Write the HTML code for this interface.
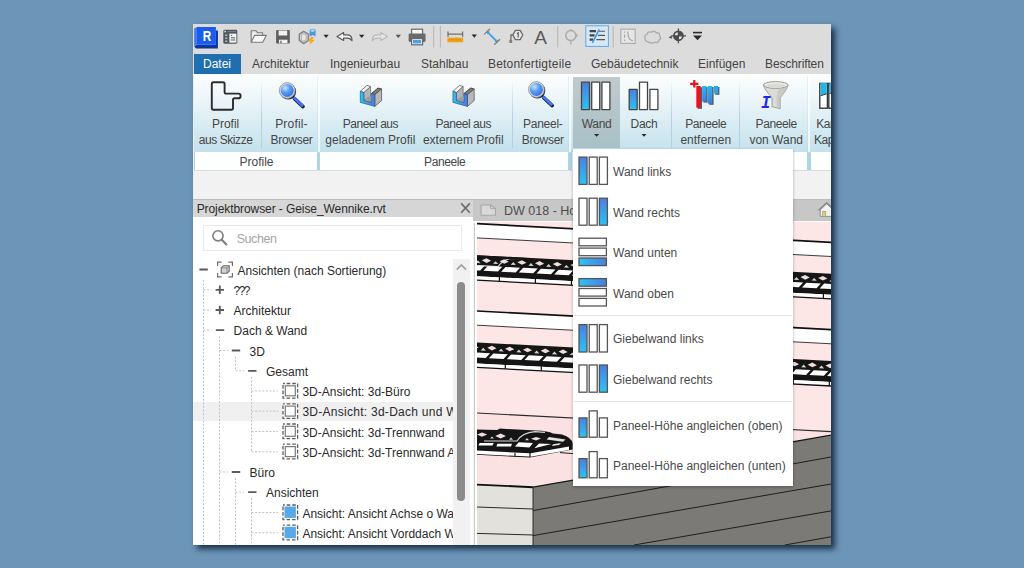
<!DOCTYPE html>
<html lang="de">
<head>
<meta charset="utf-8">
<title>Revit - Wand</title>
<style>
*{box-sizing:border-box;margin:0;padding:0}
html,body{width:1024px;height:568px;overflow:hidden}
body{background:#6c95b7;font-family:"Liberation Sans",sans-serif;font-size:12px;color:#333;position:relative}
#shadow{position:absolute;left:193px;top:24px;width:638px;height:521px;background:#dcdcdc;box-shadow:4px 4px 6px 0 rgba(16,38,62,.9)}
#c{position:absolute;left:0;top:0;width:1024px;height:568px;clip-path:polygon(193px 24px,831px 24px,831px 545px,193px 545px)}
#c>*{position:absolute}
.t{position:absolute;white-space:nowrap;line-height:14px;height:14px}
.c{text-align:center}
/* top bars */
#qat{left:193px;top:24px;width:638px;height:30px;background:#dcdcdc}
#tabs{left:193px;top:54px;width:638px;height:20px;background:#dcdcdc}
#datei{left:194px;top:54px;width:47px;height:20px;background:#1f6eaf}
.tab{font-size:12px;color:#444;top:57px}
/* ribbon */
#ribbon{left:193px;top:74px;width:638px;height:96px;background:linear-gradient(#fdfefe 0,#e9f4f8 30px,#c3e1ec 78px,#add5e4 79px,#add5e4 100%)}
.plabel{top:152px;height:18px;background:#fdfefe}
.rsep{top:78px;width:1px;height:70px;background:linear-gradient(rgba(180,205,215,0),#b3d0dc 60%,#b3d0dc)}
.rt{font-size:12px;color:#464646}
.psep{top:76px;width:3px;height:76px;background:linear-gradient(90deg,rgba(160,200,215,.22) 0,rgba(160,200,215,.22) .6px,rgba(255,255,255,.7) .6px)}
#optbar{left:193px;top:170px;width:638px;height:29px;background:#f2f2f2;border-top:1px solid #dcdcdc}
/* browser */
#pb{left:193px;top:199px;width:280px;height:346px;background:#fff}
#pbh{left:193px;top:199px;width:280px;height:18px;background:#d6d6d6;border-top:1px solid #bdbdbd}
#split{left:473px;top:199px;width:4px;height:346px;background:linear-gradient(90deg,#f4f4f4 0,#f4f4f4 1.2px,#cbcbcb 1.2px,#cbcbcb 2.2px,#fff 2.2px)}
#search{left:203px;top:225px;width:259px;height:26px;border:1px solid #e9e9e9;background:#fff}
.tr{font-size:12px;color:#2a2a2a}
#sel{left:193px;top:402px;width:260px;height:19px;background:#f0f0f0}
#sbt{left:453px;top:259px;width:17px;height:286px;background:#f1f1f1}
#sbth{left:457px;top:282px;width:8px;height:219px;background:#8b8b8b;border-radius:4px}
/* view */
#vtab{left:473px;top:199px;width:358px;height:21.5px;background:#c7c7c7;border-top:1px solid #bcbcbc;box-shadow:0 2px 0 #fff}
#view{left:477px;top:222px;width:354px;height:323px}
/* menu */
#menu{left:573px;top:149.4px;width:219.6px;height:336.6px;background:#fff;box-shadow:0 1px 3px rgba(0,0,0,.3)}
.mi{font-size:12px;color:#4a4a4a;left:613px}
.msep{left:574px;width:218px;height:1px;background:#e4e4e4}
</style>
</head>
<body>
<div id="shadow"></div>
<div id="c">
<div id="qat"></div>
<div id="tabs"></div>
<div id="datei"></div>
<span class="t tab" style="left:203px;color:#fff">Datei</span>
<span class="t tab" style="left:252px">Architektur</span>
<span class="t tab" style="left:330px">Ingenieurbau</span>
<span class="t tab" style="left:421px">Stahlbau</span>
<span class="t tab" style="left:488px;letter-spacing:.2px">Betonfertigteile</span>
<span class="t tab" style="left:591px">Gebäudetechnik</span>
<span class="t tab" style="left:698px">Einfügen</span>
<span class="t tab" style="left:765px;letter-spacing:-.12px">Beschriften</span>


<!-- quick access toolbar icons -->
<svg id="qaticons" style="left:193px;top:24px" width="638" height="30" viewBox="193 24 638 30">
<defs>
<linearGradient id="gb" x1="0" y1="0" x2="0" y2="1"><stop offset="0" stop-color="#4b7de0"/><stop offset="1" stop-color="#2cc4f2"/></linearGradient>
<linearGradient id="gbh" x1="0" y1="0" x2="1" y2="0"><stop offset="0" stop-color="#2cc4f2"/><stop offset="1" stop-color="#4b7de0"/></linearGradient>
<radialGradient id="lens" cx="0.35" cy="0.3" r="0.8"><stop offset="0" stop-color="#c9e4ff"/><stop offset="0.45" stop-color="#5a9cf0"/><stop offset="1" stop-color="#2f6be0"/></radialGradient>
</defs>
<!-- R logo -->
<path d="M215.9 30.6 H217.9 V48.4 H196 L194.2 46.5 L196.9 44.7 H215.9 Z" fill="#0b36a0"/>
<path d="M194.2 28.6 L196.9 27 V44.7 L194.2 46.5 Z" fill="#3d7ae8"/>
<rect x="196.9" y="27" width="19" height="17.7" fill="#1a5cf0"/>
<!-- home panel -->
<rect x="223.3" y="29.7" width="14" height="14" rx="1.4" fill="#50565e"/>
<rect x="229.4" y="33.6" width="7" height="9" fill="#f6f6f6"/>
<rect x="224.4" y="30.8" width="1.5" height="1.5" fill="#e8ecf0"/>
<path d="M227.6 31.6h8.4" stroke="#7a828c" stroke-width="1"/>
<path d="M225 34.4h2.4v1.6H225z M225 37.4h2.4v1.6H225z M225 40.4h2.4v1.6H225z" fill="#aab0b8"/>
<path d="M230.8 35.4h1.4 M230.8 37.8h4.4 M230.8 40h4.4" stroke="#555" stroke-width="1"/>
<!-- open folder -->
<path d="M251.2 42.2 V30.8 H256 L257.6 32.8 H262.6 V35.4" fill="#ebebeb" stroke="#7a7a7a" stroke-width="1.1" stroke-linejoin="round"/>
<path d="M251.2 42.2 L254.6 35.4 H266.2 L262.8 42.2 Z" fill="#f8f8f8" stroke="#7a7a7a" stroke-width="1.1" stroke-linejoin="round"/>
<!-- save -->
<rect x="276.1" y="29.9" width="13.7" height="13.7" rx="1" fill="#5e5e5e"/>
<rect x="278.6" y="30.5" width="8.6" height="5" fill="#f0f0f0"/>
<rect x="279" y="39.7" width="8.5" height="3.5" fill="#f0f0f0"/>
<rect x="280.4" y="40.7" width="1.2" height="2.5" fill="#5e5e5e"/>
<!-- sync cube -->
<path d="M303.6 31.4 L308.4 34.2 V40.4 L303.6 43.6 L299.3 40.4 V34.2 Z" fill="#cfcfcf" stroke="#858585" stroke-width="1.4" stroke-linejoin="round"/>
<path d="M303.6 33.8 L306.2 35.4 V39.6 L303.6 41.2 L301.4 39.6 V35.4 Z" fill="#e6e6e6" stroke="#a0a0a0" stroke-width=".7"/>
<path d="M309.6 31 Q309.6 28.8 312.6 28.8 Q315.6 28.8 315.6 31 V36.6 L312.6 35 L309.6 36.6 Z" fill="#4c97dc"/>
<ellipse cx="312.6" cy="30.6" rx="2.2" ry="1.3" fill="#a8d4f4"/>
<path d="M311.2 36.8 L307.6 41.6 L310.6 41.4 L309.4 45.2 L314.8 39.8 L312 39.9 L314 37.2 Z" fill="#f8a61c"/>
<!-- dropdown arrows -->
<path d="M323.4 34.8h5.4l-2.7 3.2z M359 34.8h5.4l-2.7 3.2z M471.6 34.6h5.4l-2.7 3.2z" fill="#2b2b2b"/><path d="M395.6 34.8h5.4l-2.7 3.2z" fill="#555"/>
<!-- undo -->
<path d="M337 36.4 L343.6 32.6 V34.8 H348 Q352 35 352 40.8 Q350.6 38.4 347.6 38.2 H343.6 V40.4 Z" fill="#f2f2f2" stroke="#5a5a5a" stroke-width="1.2" stroke-linejoin="round"/>
<!-- redo (disabled) -->
<path d="M387.4 36.4 L380.8 32.6 V34.8 H376.4 Q372.4 35 372.4 40.8 Q373.8 38.4 376.8 38.2 H380.8 V40.4 Z" fill="#e6e6e6" stroke="#b9b9b9" stroke-width="1.2" stroke-linejoin="round"/>
<!-- printer -->
<rect x="411.6" y="29.2" width="11" height="6" fill="#f6f6f6" stroke="#6a6a6a" stroke-width="1.2"/>
<rect x="408.6" y="33.6" width="17" height="8.4" rx="1.4" fill="#6a6a6a"/>
<rect x="411.6" y="38.6" width="11" height="6.2" fill="#f6f6f6" stroke="#6a6a6a" stroke-width="1.2"/>
<rect x="413" y="40" width="8.2" height="3.4" fill="#4aa0e4"/>
<!-- separators -->
<path d="M433.7 26v21.5 M440.4 26v21.5 M557.7 26v21.5 M613.2 26v21.5" stroke="#b4b4b4" stroke-width="1"/>
<!-- measure -->
<path d="M448 31.4v5.4 M462.6 31.4v5.4 M448 34.1H462.6" stroke="#707070" stroke-width="1.3" fill="none"/>
<rect x="447.4" y="37.6" width="15.8" height="4.7" fill="#f3a31c"/>
<path d="M449.5 39v1.6 M451.7 39v1.6 M453.9 39v1.6 M456.1 39v1.6 M458.3 39v1.6 M460.5 39v1.6" stroke="#c98410" stroke-width=".9"/>
<!-- aligned dimension -->
<path d="M487.4 31.8 L497.2 41.8" stroke="#3d9fe4" stroke-width="1.7"/>
<path d="M486.6 31 l3.4 .8 -2.6 2.6z M498 42.6 l-3.4 -.8 2.6 -2.6z" fill="#3d9fe4"/>
<path d="M484.2 34.4 L490 28.8 M494.2 44.8 L500 39.2" stroke="#858078" stroke-width="1.3"/>
<!-- tag -->
<path d="M515.4 30.4 H520.2 L522.8 35 L520.2 39.6 H515.4 L512.8 35 Z" fill="#e6e6e6" stroke="#6a6a6a" stroke-width="1.3" stroke-linejoin="round"/>
<path d="M517 33.8l1.2-.9v4.6" stroke="#555" stroke-width="1.1" fill="none"/>
<path d="M512.8 35 H511 L510.8 40" fill="none" stroke="#6a6a6a" stroke-width="1.3"/>
<rect x="509.4" y="40" width="2.8" height="2.9" fill="#7a7a7a"/>
<!-- spot elevation (disabled) -->
<circle cx="570.8" cy="35.6" r="5" fill="none" stroke="#adadad" stroke-width="1.5"/>
<path d="M570.8 40.6v4" stroke="#adadad" stroke-width="1.4" fill="none"/>
<path d="M575.6 33.2 l2.6 2.4 -2.6 2.4z M568.8 30.6 l2 -1.6 2 1.6z" fill="#adadad"/>
<!-- thin lines (active) -->
<rect x="585.8" y="25.8" width="22.6" height="20.6" fill="#d6e8f6" stroke="#5fa8dd" stroke-width="1"/>
<path d="M589.6 31.2h6.4 M589.6 35.4h5 M589.6 39.6h3.6" stroke="#444" stroke-width="2.2"/>
<path d="M599 31.2h6 M598 35.4h7 M596.4 39.6h8.6" stroke="#555" stroke-width="1.1"/>
<path d="M599.2 29.4 L592.4 43" stroke="#3c9be0" stroke-width="1.6"/>
<!-- disabled box w/ curve -->
<rect x="620.8" y="29.2" width="14.4" height="14.2" fill="#e6e6e6" stroke="#aeaeae" stroke-width="1.2"/>
<path d="M624.6 31.6v1.2 M624.6 34.4v3.4 M624.6 39.6v1.4 M627.8 31.6 Q627.8 40.4 633 40.8" stroke="#a2a2a2" stroke-width="1.1" fill="none"/>
<!-- cloud (disabled) -->
<path d="M647.6 41.6 Q644.4 41 645.2 38.2 Q643.8 35.4 647 34.4 Q647.6 31 651.2 32.2 Q654.2 30 656.4 32.8 Q660 32.6 659.6 36 Q661.8 38.6 659 40.2 Q658.4 43.4 655 42.2 Q652.8 44 650.4 42.4 Q648.6 43 647.6 41.6 Z" fill="#dcdcdc" stroke="#adadad" stroke-width="1.4"/>
<!-- crosshair -->
<circle cx="678.4" cy="35.8" r="4.5" fill="#ececec" stroke="#4c4c4c" stroke-width="1.8"/>
<path d="M678.4 35.8 V31.3 A4.5 4.5 0 0 1 682.9 35.8 Z M678.4 35.8 V40.3 A4.5 4.5 0 0 1 673.9 35.8 Z" fill="#4c4c4c"/>
<path d="M678.4 28.4v14.8 M671.4 35.8h14.6" stroke="#4c4c4c" stroke-width="1.3"/>
<path d="M668.6 37.6 l3.2 -2.4 v3.6 z" fill="#4c4c4c"/>
<!-- customize -->
<path d="M693 32.6h9" stroke="#2b2b2b" stroke-width="1.6"/>
<path d="M693 35.4h9l-4.5 4.8z" fill="#2b2b2b"/>
</svg>
<span class="t" style="left:201.9px;top:28.6px;font-size:14px;font-weight:bold;color:#fff;line-height:14px;transform:scaleX(.84);transform-origin:50% 50%">R</span>
<span class="t" style="left:534.3px;top:26.6px;font-size:19px;color:#5a5a5a;line-height:22px;height:22px">A</span>

<div id="ribbon"></div>
<div class="plabel" style="left:195px;width:122px"></div>
<div class="plabel" style="left:320px;width:248.4px"></div>
<div class="plabel" style="left:571.5px;width:235.5px"></div>
<div class="plabel" style="left:811px;width:30px"></div>
<div id="wandhl" style="left:573px;top:77px;width:46.8px;height:71.4px;background:linear-gradient(#c1cacd,#a8c0c7)"></div>
<div class="rsep" style="left:261px"></div>
<div class="rsep" style="left:512px"></div>
<div class="rsep" style="left:671px"></div>
<div class="rsep" style="left:739px"></div>
<div class="psep" style="left:317px"></div>
<div class="psep" style="left:568.4px"></div>
<div class="psep" style="left:807px"></div>
<span class="t c rt" style="left:155.6px;top:117px;width:140px">Profil</span>
<span class="t c rt" style="left:155.6px;top:133px;width:140px;letter-spacing:-0.43px">aus Skizze</span>
<span class="t c rt" style="left:221.5px;top:117px;width:140px;letter-spacing:0.18px">Profil-</span>
<span class="t c rt" style="left:221.5px;top:133px;width:140px;letter-spacing:-0.29px">Browser</span>
<span class="t c rt" style="left:300.4px;top:117px;width:140px;letter-spacing:-0.46px">Paneel aus</span>
<span class="t c rt" style="left:300.4px;top:133px;width:140px">geladenem Profil</span>
<span class="t c rt" style="left:393.3px;top:117px;width:140px;letter-spacing:-0.46px">Paneel aus</span>
<span class="t c rt" style="left:393.3px;top:133px;width:140px">externem Profil</span>
<span class="t c rt" style="left:472.79999999999995px;top:117px;width:140px;letter-spacing:-0.27px">Paneel-</span>
<span class="t c rt" style="left:472.79999999999995px;top:133px;width:140px;letter-spacing:-0.29px">Browser</span>
<span class="t c rt" style="left:635.8px;top:117px;width:140px;letter-spacing:-0.41px">Paneele</span>
<span class="t c rt" style="left:635.8px;top:133px;width:140px">entfernen</span>
<span class="t c rt" style="left:706.2px;top:117px;width:140px;letter-spacing:-0.41px">Paneele</span>
<span class="t c rt" style="left:706.2px;top:133px;width:140px">von Wand</span>
<span class="t c rt" style="left:526.6px;top:117px;width:140px;letter-spacing:-0.30px">Wand</span>
<span class="t c rt" style="left:574px;top:117px;width:140px;letter-spacing:-0.28px">Dach</span>
<span class="t rt" style="left:816.3px;top:117px;letter-spacing:-.5px">Kante</span>
<span class="t rt" style="left:813.9px;top:133px;letter-spacing:-.4px">Kappen</span>
<span class="t c rt pl" style="left:186.5px;top:155px;width:140px">Profile</span>
<span class="t c rt pl" style="left:374.7px;top:155px;width:140px;letter-spacing:-0.41px">Paneele</span>
<svg id="ribicons" style="left:193px;top:74px" width="638" height="78" viewBox="193 74 638 78">
<!-- profile L shape -->
<path d="M213.4 82.3 H223 Q224.6 82.3 224.6 83.9 V92 Q224.6 93.6 226.2 93.6 H238.4 Q240.6 93.6 240.6 95.9 Q240.6 98.3 238.4 98.3 H234.6 Q233 98.3 233 99.9 V108 Q233 109.7 231.4 109.7 H213.4 Q211.8 109.7 211.8 108 V83.9 Q211.8 82.3 213.4 82.3 Z" fill="none" stroke="#2b2b2b" stroke-width="1.9"/>
<!-- magnifiers -->
<g>
<path d="M294.4 98.6 L303 106.6" stroke="#161a30" stroke-width="3.6" stroke-linecap="round"/>
<path d="M293.6 97.4 L302.2 105.4" stroke="#4876e8" stroke-width="2.8" stroke-linecap="round"/>
<circle cx="288.2" cy="91.6" r="7.9" fill="#1a1a1a" opacity=".9"/>
<circle cx="287.2" cy="90.5" r="7.9" fill="#d4d8de" stroke="#8a9098" stroke-width=".8"/>
<circle cx="287.2" cy="90.5" r="6.5" fill="url(#lens)"/>
</g>
<g transform="translate(249.2 -1)">
<path d="M294.4 98.6 L303 106.6" stroke="#161a30" stroke-width="3.6" stroke-linecap="round"/>
<path d="M293.6 97.4 L302.2 105.4" stroke="#4876e8" stroke-width="2.8" stroke-linecap="round"/>
<circle cx="288.2" cy="91.6" r="7.9" fill="#1a1a1a" opacity=".9"/>
<circle cx="287.2" cy="90.5" r="7.9" fill="#d4d8de" stroke="#8a9098" stroke-width=".8"/>
<circle cx="287.2" cy="90.5" r="6.5" fill="url(#lens)"/>
</g>
<!-- U profiles -->
<g>
<path d="M360.3 91.3 L367 85.4 L370.6 86.6 L363.8 92.6 Z" fill="#f4f4f4" stroke="#4a4a4a" stroke-width=".7"/>
<path d="M363.8 92.6 L370.6 86.6 V96.4 L363.8 100.6 Z" fill="#b4b4b4" stroke="#5a5a5a" stroke-width=".6"/>
<path d="M363.8 100.6 L370.6 96.4 L371.3 102.6 Z" fill="#9c9c9c"/>
<path d="M371.3 93.6 L378 88 L381.6 89 L374.8 94.7 Z" fill="#7e7e7e" stroke="#2a2a2a" stroke-width=".8"/>
<path d="M374.8 94.7 L381.6 89 V100.6 L374.8 106.4 Z" fill="#b9b9b9" stroke="#4a4a4a" stroke-width=".7"/>
<path d="M360.3 91.3 L363.8 92.6 V100.6 L371.3 102.6 V93.6 L374.8 94.7 V106.4 L360.3 102.4 Z" fill="url(#gbh)" stroke="#2a4a7a" stroke-width=".6"/>
</g>
<g transform="translate(92.6 0)">
<path d="M360.3 91.3 L367 85.4 L370.6 86.6 L363.8 92.6 Z" fill="#f4f4f4" stroke="#4a4a4a" stroke-width=".7"/>
<path d="M363.8 92.6 L370.6 86.6 V96.4 L363.8 100.6 Z" fill="#b4b4b4" stroke="#5a5a5a" stroke-width=".6"/>
<path d="M363.8 100.6 L370.6 96.4 L371.3 102.6 Z" fill="#9c9c9c"/>
<path d="M371.3 93.6 L378 88 L381.6 89 L374.8 94.7 Z" fill="#7e7e7e" stroke="#2a2a2a" stroke-width=".8"/>
<path d="M374.8 94.7 L381.6 89 V100.6 L374.8 106.4 Z" fill="#b9b9b9" stroke="#4a4a4a" stroke-width=".7"/>
<path d="M360.3 91.3 L363.8 92.6 V100.6 L371.3 102.6 V93.6 L374.8 94.7 V106.4 L360.3 102.4 Z" fill="url(#gbh)" stroke="#2a4a7a" stroke-width=".6"/>
</g>
<!-- Wand icon -->
<g stroke="#444" stroke-width="1.3" stroke-linejoin="round">
<rect x="581.5" y="82.2" width="8" height="27.4" fill="url(#gb)"/>
<rect x="591.7" y="82.2" width="8" height="27.4" fill="#fff"/>
<rect x="601.9" y="82.2" width="8" height="27.4" fill="#fff"/>
<rect x="629.2" y="89.4" width="8" height="20.2" fill="url(#gb)"/>
<rect x="639.5" y="82.2" width="8" height="27.4" fill="#fff"/>
<rect x="649.9" y="89.4" width="8" height="20.2" fill="#fff"/>
</g>
<path d="M594 134h5.2l-2.6 2.8z M641.4 134h5.2l-2.6 2.8z" fill="#2b2b2b"/>
<!-- Paneele entfernen -->
<linearGradient id="gb2" x1="0" y1="0" x2="0" y2="1"><stop offset="0" stop-color="#27b9f1"/><stop offset="1" stop-color="#3c7fe0"/></linearGradient>
<g fill="#1c2a3c" opacity=".75"><rect x="697.6" y="87.2" width="4.4" height="21.6"/><rect x="703.4" y="87" width="4.2" height="15.6"/><rect x="709.2" y="87" width="4.4" height="17.8"/><rect x="715.2" y="87" width="4.2" height="7.8"/></g>
<rect x="696.3" y="86" width="4.4" height="21.6" fill="#ec1320"/>
<rect x="702.1" y="86" width="4.2" height="15.5" fill="url(#gb2)"/>
<rect x="707.8" y="86" width="4.4" height="17.7" fill="url(#gb2)"/>
<rect x="714" y="86" width="4.1" height="7.6" fill="#2aa6ee"/>
<path d="M694.3 80v7.6 M690.2 83.8h8.2" stroke="#ec1320" stroke-width="2.2"/>
<!-- funnel -->
<path d="M763.4 85.2 Q764 88.6 772 97.8 V106.6 L780.2 108.8 V97.8 Q787.6 88.6 788.1 85.2 Z" fill="#dcdcd8" stroke="#969692" stroke-width=".9"/>
<path d="M776.6 98 V107.8 L780.2 108.8 V97.8 Q787.6 88.6 788.1 85.2 L778 90 Z" fill="#c2c2bd" opacity=".65"/>
<ellipse cx="775.75" cy="85" rx="12.3" ry="3.4" fill="#ecece8" stroke="#9a9a96" stroke-width="1"/>
<ellipse cx="775.75" cy="85.6" rx="9.6" ry="2.2" fill="#dadad6"/>
<text transform="translate(760.9 107.8) scale(.9 1)" font-family="Liberation Mono, monospace" font-style="italic" font-weight="bold" font-size="18" fill="#2424f2">I</text>
<!-- Kante Kappen icon (cut off) -->
<g stroke="#3a3a3a" stroke-width="1.4">
<rect x="819.8" y="83.4" width="7.6" height="24.8" fill="#fff"/>
<rect x="828.8" y="83.4" width="7.6" height="24.8" fill="#fff"/>
</g>
<path d="M820.5 83 h6.2 v10.8 l-6.2 2 z M829.5 83 h6.2 v8.6 l-6.2 2 z" fill="#25b4e6"/>
<path d="M820.5 95.8 l6.2 -2 M829.5 93.6 l6.2 -2" stroke="#3a3a3a" stroke-width="1"/>
</svg>
<div id="optbar"></div>
<div id="lborder" style="left:193px;top:74px;width:1px;height:125px;background:#ededed"></div>

<div id="pb"></div>
<div id="pbh"></div>
<div id="split"></div>
<span class="t" style="left:196.7px;top:202.1px;font-size:12px;color:#2a2a2a;letter-spacing:-.08px">Projektbrowser - Geise_Wennike.rvt</span>
<div id="search"></div>
<span class="t" style="left:236.7px;top:232.2px;font-size:12.5px;color:#a6a6a6;letter-spacing:-.45px">Suchen</span>
<div id="sel"></div>
<div id="tree" style="left:193px;top:255.8px;width:260px;height:290px;overflow:hidden">
<span class="t tr" style="left:44.5px;top:7.84px">Ansichten (nach Sortierung)</span>
<span class="t tr" style="left:40.6px;top:28.09px;letter-spacing:-1.6px">???</span>
<span class="t tr" style="left:40.6px;top:48.34px">Architektur</span>
<span class="t tr" style="left:40.6px;top:68.59px">Dach &amp; Wand</span>
<span class="t tr" style="left:56.6px;top:88.84px">3D</span>
<span class="t tr" style="left:73.0px;top:109.09px">Gesamt</span>
<span class="t tr" style="left:109.4px;top:129.34px">3D-Ansicht: 3d-Büro</span>
<span class="t tr" style="left:109.4px;top:149.59px;letter-spacing:.27px">3D-Ansicht: 3d-Dach und Wand</span>
<span class="t tr" style="left:109.4px;top:169.84px">3D-Ansicht: 3d-Trennwand</span>
<span class="t tr" style="left:109.4px;top:190.09px">3D-Ansicht: 3d-Trennwand Achse</span>
<span class="t tr" style="left:56.6px;top:210.34px">Büro</span>
<span class="t tr" style="left:73.0px;top:230.59px">Ansichten</span>
<span class="t tr" style="left:109.4px;top:250.84px">Ansicht: Ansicht Achse o Wand</span>
<span class="t tr" style="left:109.4px;top:271.09px">Ansicht: Ansicht Vorddach Wand</span>
</div>
<div id="sbt"></div>
<div id="sbth"></div>
<svg id="treeg" style="left:193px;top:199px" width="284" height="346" viewBox="193 199 284 346">
<path d="M461.2 203.4 L469.8 212.8 M469.8 203.4 L461.2 212.8" stroke="#6a6a6a" stroke-width="1.6"/>
<circle cx="218" cy="235.8" r="5.1" fill="none" stroke="#7e7e7e" stroke-width="1.6"/><path d="M222 239.9 L226.4 244.5" stroke="#7e7e7e" stroke-width="2.1" stroke-linecap="round"/>
<path d="M203.5 280 V545 M203.5 289.8 H211.5 M203.5 310.0 H211.5 M203.5 330.2 H211.5 M219.5 336.2 V545 M219.5 350.5 H228 M219.5 472.0 H228 M235.5 356.5 V370.8 H244 M235.5 478.0 V545 M235.5 492.2 H244 M251.5 376.8 V451.8 M251.5 391.0 H278 M251.5 411.2 H278 M251.5 431.5 H278 M251.5 451.8 H278 M251.5 512.5 H278 M251.5 532.8 H278 M251.5 498.2 V545 " stroke="#c2c2c2" stroke-width="1" stroke-dasharray="2 1.6" fill="none"/>
<path d="M199.4 269.5 h8.4 M215.8 330.2 h8.4 M231.8 350.5 h8.4 M248.1 370.8 h8.4 M231.8 472.0 h8.4 M248.1 492.2 h8.4 M215.6 289.8 h8.4 M219.8 285.6 v8.4 M215.6 310.0 h8.4 M219.8 305.8 v8.4 " stroke="#5a5a5a" stroke-width="1.8" fill="none"/>
<g transform="translate(217 261.5)"><path d="M0.6 4.6 V0.6 H4.6 M11.4 0.6 H15.4 V4.6 M15.4 11.4 V15.4 H11.4 M4.6 15.4 H0.6 V11.4" fill="none" stroke="#6e6e6e" stroke-width="1.2"/><path d="M4.2 6.4 L6.4 4.2 H12.2 V9.6 L10 11.8 H4.2 Z" fill="#d2d2d2" stroke="#6a6a6a" stroke-width="1.1" stroke-linejoin="round"/><path d="M4.2 6.4 H10 V11.8 M10 6.4 L12.2 4.2" fill="none" stroke="#7a7a7a" stroke-width=".8"/></g>
<rect x="283" y="383.5" width="14.6" height="14.6" fill="#fff" stroke="#5e5e5e" stroke-width="1.3" stroke-dasharray="3.6 1.9" stroke-dashoffset="1.8"/><rect x="285.3" y="385.8" width="10" height="10" fill="#fdfdfd" stroke="#7c7c7c" stroke-width="1.2"/>
<rect x="283" y="403.8" width="14.6" height="14.6" fill="#fff" stroke="#5e5e5e" stroke-width="1.3" stroke-dasharray="3.6 1.9" stroke-dashoffset="1.8"/><rect x="285.3" y="406.1" width="10" height="10" fill="#fdfdfd" stroke="#7c7c7c" stroke-width="1.2"/>
<rect x="283" y="424.0" width="14.6" height="14.6" fill="#fff" stroke="#5e5e5e" stroke-width="1.3" stroke-dasharray="3.6 1.9" stroke-dashoffset="1.8"/><rect x="285.3" y="426.3" width="10" height="10" fill="#fdfdfd" stroke="#7c7c7c" stroke-width="1.2"/>
<rect x="283" y="444.2" width="14.6" height="14.6" fill="#fff" stroke="#5e5e5e" stroke-width="1.3" stroke-dasharray="3.6 1.9" stroke-dashoffset="1.8"/><rect x="285.3" y="446.6" width="10" height="10" fill="#fdfdfd" stroke="#7c7c7c" stroke-width="1.2"/>
<rect x="283" y="505.0" width="14.6" height="14.6" fill="#fff" stroke="#5e5e5e" stroke-width="1.3" stroke-dasharray="3.6 1.9" stroke-dashoffset="1.8"/><rect x="284.5" y="506.5" width="11.4" height="11.4" fill="#58a9e8"/>
<rect x="283" y="525.2" width="14.6" height="14.6" fill="#fff" stroke="#5e5e5e" stroke-width="1.3" stroke-dasharray="3.6 1.9" stroke-dashoffset="1.8"/><rect x="284.5" y="526.8" width="11.4" height="11.4" fill="#58a9e8"/>
<path d="M456.8 269.6 L461.4 265 L466 269.6" fill="none" stroke="#a0a0a0" stroke-width="1.6"/>
</svg>
<div id="vtab"></div>
<svg id="viewsvg" style="left:477px;top:222px" width="354" height="323" viewBox="477 222 354 323">
<rect x="477" y="222" width="354" height="323" fill="#fce6e6"/>
<g transform="matrix(1 0.0525 0 1 0 -25.0425)">
<rect x="477" y="413" width="360" height="120" fill="#fae2e2"/><path d="M477 413 H840" stroke="#2a2a2a" stroke-width="1.1"/>
<rect x="477" y="223.7" width="360" height="14.2" fill="#fff"/><path d="M477 223.7 H840" stroke="#111" stroke-width="1.7"/><path d="M477 237.9 H840" stroke="#2a2a2a" stroke-width=".9"/>
<rect x="477" y="311.0" width="360" height="14.2" fill="#fff"/><path d="M477 311.0 H840" stroke="#111" stroke-width="1.7"/><path d="M477 325.2 H840" stroke="#2a2a2a" stroke-width=".9"/>
<g><rect x="477" y="255.2" width="363" height="21" fill="#151515"/><rect x="477" y="276.2" width="363" height="3.8" fill="#fff"/><path d="M477 280.2 H840" stroke="#111" stroke-width="1.3"/><path d="M470.1 265.4 h14.5 l-4.4 5 h-14.5 Z M487.8 265.4 h14.5 l-4.4 5 h-14.5 Z M505.5 265.4 h14.5 l-4.4 5 h-14.5 Z M523.2 265.4 h14.5 l-4.4 5 h-14.5 Z M540.9 265.4 h14.5 l-4.4 5 h-14.5 Z M558.6 265.4 h14.5 l-4.4 5 h-14.5 Z M576.3 265.4 h14.5 l-4.4 5 h-14.5 Z M594.0 265.4 h14.5 l-4.4 5 h-14.5 Z M611.7 265.4 h14.5 l-4.4 5 h-14.5 Z M629.4 265.4 h14.5 l-4.4 5 h-14.5 Z M647.1 265.4 h14.5 l-4.4 5 h-14.5 Z M664.8 265.4 h14.5 l-4.4 5 h-14.5 Z M682.5 265.4 h14.5 l-4.4 5 h-14.5 Z M700.2 265.4 h14.5 l-4.4 5 h-14.5 Z M717.9 265.4 h14.5 l-4.4 5 h-14.5 Z M735.6 265.4 h14.5 l-4.4 5 h-14.5 Z M753.3 265.4 h14.5 l-4.4 5 h-14.5 Z M771.0 265.4 h14.5 l-4.4 5 h-14.5 Z M788.7 265.4 h14.5 l-4.4 5 h-14.5 Z M806.4 265.4 h14.5 l-4.4 5 h-14.5 Z M824.1 265.4 h14.5 l-4.4 5 h-14.5 Z M841.8 265.4 h14.5 l-4.4 5 h-14.5 Z " fill="#fff"/><path d="M486.5 257.8 l4.6 2.3 l-4.6 2.3 l-4.6 -2.3 Z M504.2 257.8 l4.6 2.3 l-4.6 2.3 l-4.6 -2.3 Z M521.9 257.8 l4.6 2.3 l-4.6 2.3 l-4.6 -2.3 Z M539.6 257.8 l4.6 2.3 l-4.6 2.3 l-4.6 -2.3 Z M557.3 257.8 l4.6 2.3 l-4.6 2.3 l-4.6 -2.3 Z M575.0 257.8 l4.6 2.3 l-4.6 2.3 l-4.6 -2.3 Z M592.7 257.8 l4.6 2.3 l-4.6 2.3 l-4.6 -2.3 Z M610.4 257.8 l4.6 2.3 l-4.6 2.3 l-4.6 -2.3 Z M628.1 257.8 l4.6 2.3 l-4.6 2.3 l-4.6 -2.3 Z M645.8 257.8 l4.6 2.3 l-4.6 2.3 l-4.6 -2.3 Z M663.5 257.8 l4.6 2.3 l-4.6 2.3 l-4.6 -2.3 Z M681.2 257.8 l4.6 2.3 l-4.6 2.3 l-4.6 -2.3 Z M698.9 257.8 l4.6 2.3 l-4.6 2.3 l-4.6 -2.3 Z M716.6 257.8 l4.6 2.3 l-4.6 2.3 l-4.6 -2.3 Z M734.3 257.8 l4.6 2.3 l-4.6 2.3 l-4.6 -2.3 Z M752.0 257.8 l4.6 2.3 l-4.6 2.3 l-4.6 -2.3 Z M769.7 257.8 l4.6 2.3 l-4.6 2.3 l-4.6 -2.3 Z M787.4 257.8 l4.6 2.3 l-4.6 2.3 l-4.6 -2.3 Z M805.1 257.8 l4.6 2.3 l-4.6 2.3 l-4.6 -2.3 Z M822.8 257.8 l4.6 2.3 l-4.6 2.3 l-4.6 -2.3 Z M840.5 257.8 l4.6 2.3 l-4.6 2.3 l-4.6 -2.3 Z M858.2 257.8 l4.6 2.3 l-4.6 2.3 l-4.6 -2.3 Z " fill="#f0dcdc"/><path d="M477.9 260.2 l2.6 2.8 h-5.2 Z M495.6 260.2 l2.6 2.8 h-5.2 Z M513.3 260.2 l2.6 2.8 h-5.2 Z M531.0 260.2 l2.6 2.8 h-5.2 Z M548.7 260.2 l2.6 2.8 h-5.2 Z M566.4 260.2 l2.6 2.8 h-5.2 Z M584.1 260.2 l2.6 2.8 h-5.2 Z M601.8 260.2 l2.6 2.8 h-5.2 Z M619.5 260.2 l2.6 2.8 h-5.2 Z M637.2 260.2 l2.6 2.8 h-5.2 Z M654.9 260.2 l2.6 2.8 h-5.2 Z M672.6 260.2 l2.6 2.8 h-5.2 Z M690.3 260.2 l2.6 2.8 h-5.2 Z M708.0 260.2 l2.6 2.8 h-5.2 Z M725.7 260.2 l2.6 2.8 h-5.2 Z M743.4 260.2 l2.6 2.8 h-5.2 Z M761.1 260.2 l2.6 2.8 h-5.2 Z M778.8 260.2 l2.6 2.8 h-5.2 Z M796.5 260.2 l2.6 2.8 h-5.2 Z M814.2 260.2 l2.6 2.8 h-5.2 Z M831.9 260.2 l2.6 2.8 h-5.2 Z M849.6 260.2 l2.6 2.8 h-5.2 Z " fill="#d4d4d4"/><path d="M499.4 275.7 v4.5 M535.4 275.7 v4.5 M571.4 275.7 v4.5 M607.4 275.7 v4.5 M643.4 275.7 v4.5 M679.4 275.7 v4.5 M715.4 275.7 v4.5 M751.4 275.7 v4.5 M787.4 275.7 v4.5 M823.4 275.7 v4.5 " stroke="#111" stroke-width="1.2"/></g>
<g><rect x="477" y="342.4" width="363" height="21" fill="#151515"/><rect x="477" y="363.4" width="363" height="3.8" fill="#fff"/><path d="M477 367.4 H840" stroke="#111" stroke-width="1.3"/><path d="M457.7 352.6 h14.6 l-4.4 5 h-14.6 Z M475.5 352.6 h14.6 l-4.4 5 h-14.6 Z M493.3 352.6 h14.6 l-4.4 5 h-14.6 Z M511.1 352.6 h14.6 l-4.4 5 h-14.6 Z M528.9 352.6 h14.6 l-4.4 5 h-14.6 Z M546.7 352.6 h14.6 l-4.4 5 h-14.6 Z M564.5 352.6 h14.6 l-4.4 5 h-14.6 Z M582.3 352.6 h14.6 l-4.4 5 h-14.6 Z M600.1 352.6 h14.6 l-4.4 5 h-14.6 Z M617.9 352.6 h14.6 l-4.4 5 h-14.6 Z M635.7 352.6 h14.6 l-4.4 5 h-14.6 Z M653.5 352.6 h14.6 l-4.4 5 h-14.6 Z M671.3 352.6 h14.6 l-4.4 5 h-14.6 Z M689.1 352.6 h14.6 l-4.4 5 h-14.6 Z M706.9 352.6 h14.6 l-4.4 5 h-14.6 Z M724.7 352.6 h14.6 l-4.4 5 h-14.6 Z M742.5 352.6 h14.6 l-4.4 5 h-14.6 Z M760.3 352.6 h14.6 l-4.4 5 h-14.6 Z M778.1 352.6 h14.6 l-4.4 5 h-14.6 Z M795.9 352.6 h14.6 l-4.4 5 h-14.6 Z M813.7 352.6 h14.6 l-4.4 5 h-14.6 Z M831.5 352.6 h14.6 l-4.4 5 h-14.6 Z M849.3 352.6 h14.6 l-4.4 5 h-14.6 Z " fill="#fff"/><path d="M474.1 345.0 l4.6 2.3 l-4.6 2.3 l-4.6 -2.3 Z M491.9 345.0 l4.6 2.3 l-4.6 2.3 l-4.6 -2.3 Z M509.7 345.0 l4.6 2.3 l-4.6 2.3 l-4.6 -2.3 Z M527.5 345.0 l4.6 2.3 l-4.6 2.3 l-4.6 -2.3 Z M545.3 345.0 l4.6 2.3 l-4.6 2.3 l-4.6 -2.3 Z M563.1 345.0 l4.6 2.3 l-4.6 2.3 l-4.6 -2.3 Z M580.9 345.0 l4.6 2.3 l-4.6 2.3 l-4.6 -2.3 Z M598.7 345.0 l4.6 2.3 l-4.6 2.3 l-4.6 -2.3 Z M616.5 345.0 l4.6 2.3 l-4.6 2.3 l-4.6 -2.3 Z M634.3 345.0 l4.6 2.3 l-4.6 2.3 l-4.6 -2.3 Z M652.1 345.0 l4.6 2.3 l-4.6 2.3 l-4.6 -2.3 Z M669.9 345.0 l4.6 2.3 l-4.6 2.3 l-4.6 -2.3 Z M687.7 345.0 l4.6 2.3 l-4.6 2.3 l-4.6 -2.3 Z M705.5 345.0 l4.6 2.3 l-4.6 2.3 l-4.6 -2.3 Z M723.3 345.0 l4.6 2.3 l-4.6 2.3 l-4.6 -2.3 Z M741.1 345.0 l4.6 2.3 l-4.6 2.3 l-4.6 -2.3 Z M758.9 345.0 l4.6 2.3 l-4.6 2.3 l-4.6 -2.3 Z M776.7 345.0 l4.6 2.3 l-4.6 2.3 l-4.6 -2.3 Z M794.5 345.0 l4.6 2.3 l-4.6 2.3 l-4.6 -2.3 Z M812.3 345.0 l4.6 2.3 l-4.6 2.3 l-4.6 -2.3 Z M830.1 345.0 l4.6 2.3 l-4.6 2.3 l-4.6 -2.3 Z M847.9 345.0 l4.6 2.3 l-4.6 2.3 l-4.6 -2.3 Z M865.7 345.0 l4.6 2.3 l-4.6 2.3 l-4.6 -2.3 Z " fill="#f0dcdc"/><path d="M465.5 347.4 l2.6 2.8 h-5.2 Z M483.3 347.4 l2.6 2.8 h-5.2 Z M501.1 347.4 l2.6 2.8 h-5.2 Z M518.9 347.4 l2.6 2.8 h-5.2 Z M536.7 347.4 l2.6 2.8 h-5.2 Z M554.5 347.4 l2.6 2.8 h-5.2 Z M572.3 347.4 l2.6 2.8 h-5.2 Z M590.1 347.4 l2.6 2.8 h-5.2 Z M607.9 347.4 l2.6 2.8 h-5.2 Z M625.7 347.4 l2.6 2.8 h-5.2 Z M643.5 347.4 l2.6 2.8 h-5.2 Z M661.3 347.4 l2.6 2.8 h-5.2 Z M679.1 347.4 l2.6 2.8 h-5.2 Z M696.9 347.4 l2.6 2.8 h-5.2 Z M714.7 347.4 l2.6 2.8 h-5.2 Z M732.5 347.4 l2.6 2.8 h-5.2 Z M750.3 347.4 l2.6 2.8 h-5.2 Z M768.1 347.4 l2.6 2.8 h-5.2 Z M785.9 347.4 l2.6 2.8 h-5.2 Z M803.7 347.4 l2.6 2.8 h-5.2 Z M821.5 347.4 l2.6 2.8 h-5.2 Z M839.3 347.4 l2.6 2.8 h-5.2 Z M857.1 347.4 l2.6 2.8 h-5.2 Z " fill="#d4d4d4"/><path d="M505.3 362.9 v4.5 M541.3 362.9 v4.5 M577.3 362.9 v4.5 M613.3 362.9 v4.5 M649.3 362.9 v4.5 M685.3 362.9 v4.5 M721.3 362.9 v4.5 M757.3 362.9 v4.5 M793.3 362.9 v4.5 M829.3 362.9 v4.5 " stroke="#111" stroke-width="1.2"/></g>
<path d="M477 265.5 H498 Q503 258 512 256.6 H526" fill="none" stroke="#e8e8e8" stroke-width="1.1"/>
<path d="M477 255.2 H528 L536 257.6 H477 Z" fill="#151515"/>
</g>
<g>
<path d="M477 429.4 L497 430 L500 428.6 L536 430.6 Q548 431 553 433.6 L562 434.6 Q572 438 572.6 443.4 V449.6 L530 457.6 L477 454.8 Z" fill="#151515"/>
<path d="M477 450.6 L529.4 453.2 V456.6 L477 454 Z M530.6 453.2 L569 446.6 V450 L530.6 456.8 Z" fill="#fff"/>
<path d="M560 452.6 L573 453.6" stroke="#222" stroke-width="1"/>
<path d="M515 453 v3.4" stroke="#111" stroke-width="1.1"/>
<path d="M479.6 443 H493.8 L492.4 445.6 H478.4 Z M497.4 443.8 H512 L511 446.4 H496.4 Z M518.7 442.3 L533 443 L529.4 447.6 L515 446.6 Z M539 443.6 L551.4 444 L534.4 448.2 Z" fill="#fff"/>
<path d="M549 437 L565.6 439.6 L563 441.8 L546.6 439.6 Z M553 444.2 L561 443 L559 445 L552 446 Z" fill="#e4e4e4"/>
<path d="M482 432.4 l5.2 2.2 -5.2 2.2 -5 -2.2 Z M500.6 433.6 l5.4 2.4 -5.4 2.4 -5.4 -2.4 Z M536 437 l5 1.6 -5 1.8 -5 -1.6 Z" fill="#f0dcdc"/>
<path d="M492 436.4 l2 2.2 h-4 Z M511 437.6 l2 2.2 h-4 Z M527 438 l2 2.2 h-4 Z" fill="#d4d4d4"/>
<path d="M484 441 H517 Q522 432.6 535 431.6 L545 432.4" fill="none" stroke="#d8d8d8" stroke-width="1.1"/>
</g>
<path d="M477 485 L533 487 V545 H477 Z" fill="#e3e1dc"/>
<path d="M533 487 L831 435.2 V545 H533 Z" fill="#7b7a77"/>
<path d="M477 484.6 L533 487.2" fill="none" stroke="#111" stroke-width="1.9"/><path d="M533 487.2 L831 435.2" fill="none" stroke="#1a1a1a" stroke-width="1.3"/>
<path d="M533 487 V545" stroke="#2a2a2a" stroke-width="1"/>
<path d="M477 507 L533 509 M477 533.4 L533 535" stroke="#2a2a2a" stroke-width="1"/>
<path d="M533 510.6 L831 457 M533 535.6 L831 484 M634 545 L831 510.9 M784.8 545 L831 536.8" stroke="#1e1e1e" stroke-width="1"/>
</svg>

<svg id="vtabicons" style="left:475px;top:199px" width="356" height="23" viewBox="475 199 356 23">
<path d="M481 205 H490.6 L495.4 208.6 V215.2 H481 Z" fill="#d9d9d9" stroke="#a6a6a6" stroke-width="1.1" stroke-linejoin="round"/>
<path d="M490.6 205 V208.6 H495.4" fill="none" stroke="#a6a6a6" stroke-width="1"/>
<path d="M820.2 209.6 V216.4 H833.2 V209.6 L826.7 203.8 Z" fill="#f2f2f0" stroke="#8e8e8e" stroke-width="1"/>
<path d="M818.6 210.4 L826.7 202.8 L834.8 210.4" fill="none" stroke="#8a8a8a" stroke-width="1.5" stroke-linejoin="round"/>
<rect x="822.7" y="211.4" width="3" height="5" fill="#e2d466" stroke="#9a9a8a" stroke-width=".7"/>
</svg>
<span class="t" style="left:504px;top:204px;font-size:12.5px;color:#4e4e4e">DW 018 - Ho</span>
<div id="menu"></div>
<span class="t mi" style="top:165.14px">Wand links</span>
<span class="t mi" style="top:205.64px">Wand rechts</span>
<span class="t mi" style="top:246.24px">Wand unten</span>
<span class="t mi" style="top:287.14px">Wand oben</span>
<span class="t mi" style="top:332.44px">Giebelwand links</span>
<span class="t mi" style="top:373.24px">Giebelwand rechts</span>
<span class="t mi" style="top:419.04px">Paneel-Höhe angleichen (oben)</span>
<span class="t mi" style="top:459.44px">Paneel-Höhe angleichen (unten)</span>
<div class="msep" style="top:315px"></div>
<div class="msep" style="top:401px"></div>
<svg id="menuicons" style="left:573px;top:150px" width="220" height="336" viewBox="573 150 220 336">
<g stroke="#555" stroke-width="1.3">
<rect x="579" y="157.1" width="8" height="27.3" fill="url(#gb)"/><rect x="589.2" y="157.1" width="8" height="27.3" fill="#fff"/><rect x="599.4" y="157.1" width="8" height="27.3" fill="#fff"/>
<rect x="579" y="198.2" width="8" height="27.0" fill="#fff"/><rect x="589.2" y="198.2" width="8" height="27.0" fill="#fff"/><rect x="599.4" y="198.2" width="8" height="27.0" fill="url(#gb)"/>
<rect x="579" y="238.2" width="27.4" height="7.6" fill="#fff"/><rect x="579" y="248.1" width="27.4" height="7.6" fill="#fff"/><rect x="579" y="258.0" width="27.4" height="7.6" fill="url(#gbh)"/>
<rect x="579" y="278.6" width="27.4" height="7.6" fill="url(#gbh)"/><rect x="579" y="288.5" width="27.4" height="7.6" fill="#fff"/><rect x="579" y="298.4" width="27.4" height="7.6" fill="#fff"/>
<rect x="579" y="324.6" width="8" height="27.4" fill="url(#gb)"/><rect x="589.2" y="324.6" width="8" height="27.4" fill="#fff"/><rect x="599.4" y="324.6" width="8" height="27.4" fill="#fff"/>
<rect x="579" y="365.0" width="8" height="27.2" fill="#fff"/><rect x="589.2" y="365.0" width="8" height="27.2" fill="#fff"/><rect x="599.4" y="365.0" width="8" height="27.2" fill="url(#gb)"/>
<rect x="579" y="417.9" width="8" height="19.3" fill="url(#gb)"/><rect x="589.2" y="410.9" width="8" height="26.3" fill="#fff"/><rect x="599.4" y="417.9" width="8" height="19.3" fill="#fff"/>
<rect x="579" y="458.6" width="8" height="19.2" fill="url(#gb)"/><rect x="589.2" y="451.6" width="8" height="26.2" fill="#fff"/><rect x="599.4" y="458.6" width="8" height="19.2" fill="#fff"/>
</g>
</svg>
</div>
</body>
</html>
